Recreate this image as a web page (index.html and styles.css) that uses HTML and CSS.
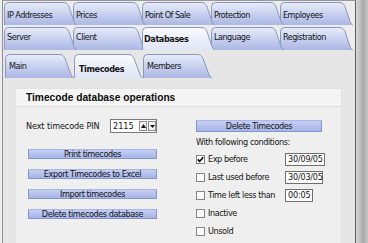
FILE: index.html
```html
<!DOCTYPE html>
<html>
<head>
<meta charset="utf-8">
<link rel="stylesheet" href="styles.css">
</head>
<body>
<svg class="defs" width="0" height="0">
  <defs>
    <linearGradient id="tabg" x1="0" y1="0" x2="0" y2="1">
      <stop offset="0" stop-color="#e9edf9"/>
      <stop offset="0.45" stop-color="#cbd3f0"/>
      <stop offset="1" stop-color="#abb8e4"/>
    </linearGradient>
    <linearGradient id="tabsel" x1="0" y1="0" x2="0" y2="1">
      <stop offset="0" stop-color="#f9fafe"/>
      <stop offset="1" stop-color="#dfe5f6"/>
    </linearGradient>
  </defs>
</svg>
<div class="frame">
  <div class="edge-left"></div>
  <div class="main">
    <div class="tabs">
      <div class="tabrow">
        <div class="tab"><svg class="shape" width="73" height="23" viewBox="0 0 73 23"><path class="fill" d="M0.5,23 V4.5 Q0.5,0.5 4.5,0.5 H59 C62,0.5 63.5,1.5 65,4.5 L70,19.5 C71,21.8 71.8,22.6 72.8,23 Z"/><path class="edge" d="M0.5,23 V4.5 Q0.5,0.5 4.5,0.5 H59 C62,0.5 63.5,1.5 65,4.5 L70,19.5 C71,21.8 71.8,22.6 72.8,23"/></svg><span class="label">IP Addresses</span></div>
        <div class="tab"><svg class="shape" width="73" height="23" viewBox="0 0 73 23"><path class="fill" d="M0.5,23 V4.5 Q0.5,0.5 4.5,0.5 H59 C62,0.5 63.5,1.5 65,4.5 L70,19.5 C71,21.8 71.8,22.6 72.8,23 Z"/><path class="edge" d="M0.5,23 V4.5 Q0.5,0.5 4.5,0.5 H59 C62,0.5 63.5,1.5 65,4.5 L70,19.5 C71,21.8 71.8,22.6 72.8,23"/></svg><span class="label">Prices</span></div>
        <div class="tab"><svg class="shape" width="73" height="23" viewBox="0 0 73 23"><path class="fill" d="M0.5,23 V4.5 Q0.5,0.5 4.5,0.5 H59 C62,0.5 63.5,1.5 65,4.5 L70,19.5 C71,21.8 71.8,22.6 72.8,23 Z"/><path class="edge" d="M0.5,23 V4.5 Q0.5,0.5 4.5,0.5 H59 C62,0.5 63.5,1.5 65,4.5 L70,19.5 C71,21.8 71.8,22.6 72.8,23"/></svg><span class="label">Point Of Sale</span></div>
        <div class="tab"><svg class="shape" width="73" height="23" viewBox="0 0 73 23"><path class="fill" d="M0.5,23 V4.5 Q0.5,0.5 4.5,0.5 H59 C62,0.5 63.5,1.5 65,4.5 L70,19.5 C71,21.8 71.8,22.6 72.8,23 Z"/><path class="edge" d="M0.5,23 V4.5 Q0.5,0.5 4.5,0.5 H59 C62,0.5 63.5,1.5 65,4.5 L70,19.5 C71,21.8 71.8,22.6 72.8,23"/></svg><span class="label">Protection</span></div>
        <div class="tab"><svg class="shape" width="73" height="23" viewBox="0 0 73 23"><path class="fill" d="M0.5,23 V4.5 Q0.5,0.5 4.5,0.5 H59 C62,0.5 63.5,1.5 65,4.5 L70,19.5 C71,21.8 71.8,22.6 72.8,23 Z"/><path class="edge" d="M0.5,23 V4.5 Q0.5,0.5 4.5,0.5 H59 C62,0.5 63.5,1.5 65,4.5 L70,19.5 C71,21.8 71.8,22.6 72.8,23"/></svg><span class="label">Employees</span></div>
      </div>
      <div class="tabrow second">
        <div class="tab"><svg class="shape" width="73" height="23" viewBox="0 0 73 23"><path class="fill" d="M0.5,23 V4.5 Q0.5,0.5 4.5,0.5 H59 C62,0.5 63.5,1.5 65,4.5 L70,19.5 C71,21.8 71.8,22.6 72.8,23 Z"/><path class="edge" d="M0.5,23 V4.5 Q0.5,0.5 4.5,0.5 H59 C62,0.5 63.5,1.5 65,4.5 L70,19.5 C71,21.8 71.8,22.6 72.8,23"/></svg><span class="label">Server</span></div>
        <div class="tab"><svg class="shape" width="73" height="23" viewBox="0 0 73 23"><path class="fill" d="M0.5,23 V4.5 Q0.5,0.5 4.5,0.5 H59 C62,0.5 63.5,1.5 65,4.5 L70,19.5 C71,21.8 71.8,22.6 72.8,23 Z"/><path class="edge" d="M0.5,23 V4.5 Q0.5,0.5 4.5,0.5 H59 C62,0.5 63.5,1.5 65,4.5 L70,19.5 C71,21.8 71.8,22.6 72.8,23"/></svg><span class="label">Client</span></div>
        <div class="tab sel"><svg class="shape" width="73" height="23" viewBox="0 0 73 23"><path class="fill" d="M0.5,23 V4.5 Q0.5,0.5 4.5,0.5 H59 C62,0.5 63.5,1.5 65,4.5 L70,19.5 C71,21.8 71.8,22.6 72.8,23 Z"/><path class="edge" d="M0.5,23 V4.5 Q0.5,0.5 4.5,0.5 H59 C62,0.5 63.5,1.5 65,4.5 L70,19.5 C71,21.8 71.8,22.6 72.8,23"/></svg><span class="label">Databases</span></div>
        <div class="tab"><svg class="shape" width="73" height="23" viewBox="0 0 73 23"><path class="fill" d="M0.5,23 V4.5 Q0.5,0.5 4.5,0.5 H59 C62,0.5 63.5,1.5 65,4.5 L70,19.5 C71,21.8 71.8,22.6 72.8,23 Z"/><path class="edge" d="M0.5,23 V4.5 Q0.5,0.5 4.5,0.5 H59 C62,0.5 63.5,1.5 65,4.5 L70,19.5 C71,21.8 71.8,22.6 72.8,23"/></svg><span class="label">Language</span></div>
        <div class="tab"><svg class="shape" width="73" height="23" viewBox="0 0 73 23"><path class="fill" d="M0.5,23 V4.5 Q0.5,0.5 4.5,0.5 H59 C62,0.5 63.5,1.5 65,4.5 L70,19.5 C71,21.8 71.8,22.6 72.8,23 Z"/><path class="edge" d="M0.5,23 V4.5 Q0.5,0.5 4.5,0.5 H59 C62,0.5 63.5,1.5 65,4.5 L70,19.5 C71,21.8 71.8,22.6 72.8,23"/></svg><span class="label">Registration</span></div>
      </div>
    </div>
    <div class="content">
      <div class="tabrow sub">
        <div class="tab"><svg class="shape" width="69" height="24" viewBox="0 0 69 24"><path class="fill" d="M0.5,24 V4.5 Q0.5,0.5 4.5,0.5 H54 C57,0.5 58.5,1.5 60,4.5 L66,20.5 C67,22.8 67.8,23.6 68.8,24 Z"/><path class="edge" d="M0.5,24 V4.5 Q0.5,0.5 4.5,0.5 H54 C57,0.5 58.5,1.5 60,4.5 L66,20.5 C67,22.8 67.8,23.6 68.8,24"/></svg><span class="label">Main</span></div>
        <div class="tab sel"><svg class="shape" width="69" height="24" viewBox="0 0 69 24"><path class="fill" d="M0.5,24 V4.5 Q0.5,0.5 4.5,0.5 H54 C57,0.5 58.5,1.5 60,4.5 L66,20.5 C67,22.8 67.8,23.6 68.8,24 Z"/><path class="edge" d="M0.5,24 V4.5 Q0.5,0.5 4.5,0.5 H54 C57,0.5 58.5,1.5 60,4.5 L66,20.5 C67,22.8 67.8,23.6 68.8,24"/></svg><span class="label">Timecodes</span></div>
        <div class="tab"><svg class="shape" width="69" height="24" viewBox="0 0 69 24"><path class="fill" d="M0.5,24 V4.5 Q0.5,0.5 4.5,0.5 H54 C57,0.5 58.5,1.5 60,4.5 L66,20.5 C67,22.8 67.8,23.6 68.8,24 Z"/><path class="edge" d="M0.5,24 V4.5 Q0.5,0.5 4.5,0.5 H54 C57,0.5 58.5,1.5 60,4.5 L66,20.5 C67,22.8 67.8,23.6 68.8,24"/></svg><span class="label">Members</span></div>
      </div>
      <div class="panel">
        <div class="panel-head">Timecode database operations</div>
        <div class="panel-body">
          <div class="col-left">
            <div class="pin-row">
              <span class="pin-label">Next timecode PIN</span>
              <div class="spin">
                <span class="spin-val">2115</span>
                <span class="spin-btn"><svg width="5" height="4" viewBox="0 0 5 4"><path d="M2.5,0 L5,4 H0 Z" fill="#111"/></svg></span>
                <span class="spin-btn"><svg width="5" height="3" viewBox="0 0 5 3"><path d="M0,0 H5 L2.5,3 Z" fill="#111"/></svg></span>
              </div>
            </div>
            <div class="btn first">Print timecodes</div>
            <div class="btn">Export Timecodes to Excel</div>
            <div class="btn">Import timecodes</div>
            <div class="btn">Delete timecodes database</div>
          </div>
          <div class="col-right">
            <div class="btn wide">Delete Timecodes</div>
            <div class="cond-title">With following conditions:</div>
            <div class="cond">
              <span class="check on"><svg width="7" height="7" viewBox="0 0 7 7"><path d="M0.8,3.4 L2.7,5.4 L6.2,1.2" fill="none" stroke="#000" stroke-width="1.6"/></svg></span>
              <span class="cond-label">Exp before</span>
              <span class="field w39">30/09/05</span>
            </div>
            <div class="cond">
              <span class="check"></span>
              <span class="cond-label">Last used before</span>
              <span class="field w37">30/03/05</span>
            </div>
            <div class="cond">
              <span class="check"></span>
              <span class="cond-label">Time left less than</span>
              <span class="field w28">00:05</span>
            </div>
            <div class="cond">
              <span class="check"></span>
              <span class="cond-label">Inactive</span>
            </div>
            <div class="cond">
              <span class="check"></span>
              <span class="cond-label">Unsold</span>
            </div>
          </div>
        </div>
      </div>
    </div>
  </div>
  <div class="edge-right"></div>
</div>
</body>
</html>
```

FILE: styles.css
```css
* { box-sizing: border-box; }
html, body { margin: 0; padding: 0; }
body {
  width: 368px;
  height: 243px;
  overflow: hidden;
  background: #e6e6e6;
  font-family: "DejaVu Sans Condensed", "DejaVu Sans", sans-serif;
  font-stretch: condensed;
  font-size: 9px;
  letter-spacing: -0.4px;
  color: #141414;
}
.defs { display: block; width: 0; height: 0; overflow: hidden; }
.frame { display: flex; height: 243px; }
.edge-left { width: 2px; flex: none; background: #ededed; }
.main {
  width: 354px;
  flex: none;
  border-left: 1px solid #8e8e8e;
  border-top: 1px solid #9a9a9a;
  border-right: 1px solid #5c5c5c;
  background: #e6e6e6;
  display: flex;
  flex-direction: column;
  overflow: hidden;
}
.edge-right {
  width: 12px;
  flex: none;
  background: linear-gradient(to right, #d8d8d8 0, #c2c2c2 30%, #a8a8a8 60%, #c6c6c6 100%);
}
.tabs { background: #ececec; padding-top: 1px; }
.tabrow { display: flex; height: 23px; padding-left: 1px; }
.tabrow + .tabrow { margin-top: 2px; }
.tab { position: relative; width: 69px; flex: none; }
.tab:nth-child(1) { z-index: 5; }
.tab:nth-child(2) { z-index: 4; }
.tab:nth-child(3) { z-index: 3; }
.tab:nth-child(4) { z-index: 2; }
.tab:nth-child(5) { z-index: 1; }
.tab.sel { z-index: 9; }
.shape { position: absolute; left: 0; top: 0; overflow: visible; }
.fill { fill: url(#tabg); }
.tab.sel .fill { fill: url(#tabsel); }
.edge { fill: none; stroke: #8a96c4; stroke-width: 1; }
.label {
  position: relative;
  display: block;
  padding: 7px 0 0 3px;
  line-height: 12px;
  white-space: nowrap;
  letter-spacing: -0.5px;
}
.tabrow.second .label { padding-top: 4px; }
.tabrow.second .tab.sel .label { font-weight: bold; padding-top: 6px; padding-left: 2px; letter-spacing: -0.4px; }
.content { flex: 1; display: flex; flex-direction: column; padding-top: 4px; }
.tabrow.sub { height: 24px; padding-left: 2px; }
.tabrow.sub .tab { width: 69px; }
.tabrow.sub .label { padding: 6px 0 0 4px; }
.tabrow.sub .tab.sel .label { font-weight: bold; padding: 9px 0 0 5px; letter-spacing: -0.4px; }
.panel {
  margin: 10px 13px 0 12px;
  flex: 1;
  background: #efefef;
  border: 1px solid #e2e2e2;
  border-bottom: none;
}
.panel-head {
  height: 18px;
  padding: 3px 0 0 10px;
  font-family: "Liberation Sans", sans-serif;
  font-stretch: normal;
  font-weight: bold;
  font-size: 10.2px;
  letter-spacing: 0;
  line-height: 12px;
  background: #f4f4f4;
  border-bottom: 1px solid #dedede;
  color: #0c0c0c;
}
.panel-body { display: flex; padding: 12px 0 0 10px; }
.col-left { width: 132px; flex: none; display: flex; flex-direction: column; }
.pin-row { display: flex; align-items: center; height: 14px; }
.pin-label { width: 84px; letter-spacing: -0.1px; }
.spin {
  display: flex;
  align-items: center;
  height: 14px;
  width: 47px;
  border: 1px solid #7a7a7a;
  background: #fff;
}
.spin-val { width: 27px; padding-left: 2px; letter-spacing: 0; }
.spin-btn {
  width: 8px;
  height: 10px;
  margin-left: 1px;
  border: 1px solid #8a8a8a;
  background: #f4f4f4;
  display: flex;
  align-items: center;
  justify-content: center;
}
.btn {
  height: 10px;
  margin-left: 2px;
  width: 129px;
  margin-top: 10px;
  text-align: center;
  line-height: 9px;
  background: linear-gradient(#c4cff3, #a6b5e7);
  border: 1px solid #8395cf;
  border-top-color: #aab7e6;
  white-space: nowrap;
}
.btn.first { margin-top: 16px; }
.col-right { margin-left: 38px; width: 130px; display: flex; flex-direction: column; }
.btn.wide { margin: 1px 0 0 0; width: 126px; height: 12px; line-height: 11px; }
.cond-title { margin-top: 4px; line-height: 12px; }
.cond-title + .cond { margin-top: 2px; }
.cond { display: flex; align-items: center; height: 18px; }
.check {
  width: 9px;
  height: 9px;
  border: 1px solid #858585;
  background: #fff;
  display: flex;
  align-items: center;
  justify-content: center;
  flex: none;
}
.cond-label { margin-left: 3px; width: 77px; white-space: nowrap; }
.field {
  height: 13px;
  line-height: 11px;
  padding-left: 2px;
  border: 1px solid #6f6f6f;
  background: #fff;
  letter-spacing: -0.2px;
}
.w39 { width: 40px; }
.w37 { width: 38px; }
.w28 { width: 28px; }
```
